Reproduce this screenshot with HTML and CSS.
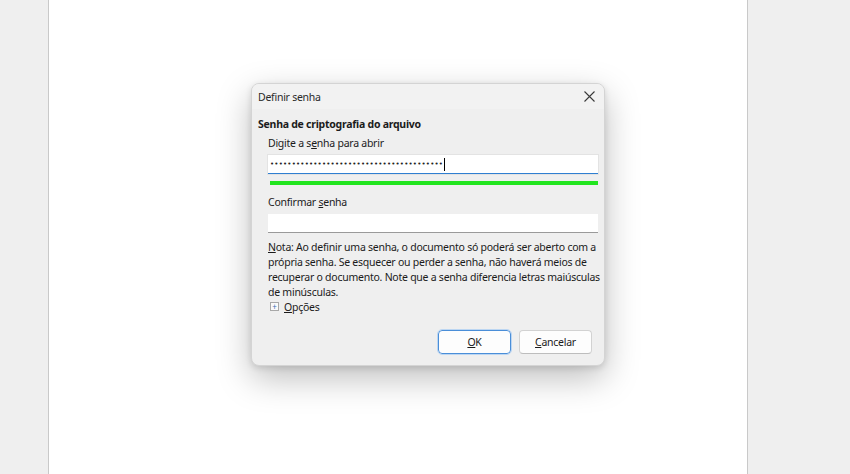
FILE: index.html
```html
<!DOCTYPE html>
<html lang="pt-BR">
<head>
    <meta charset="UTF-8">
    <meta name="viewport" content="width=device-width, initial-scale=1.0">
    <title>Definir senha</title>
    <link rel="stylesheet" href="styles.css">
</head>
<body>
    <div class="page">
        <div class="dialog">
            <div class="titlebar">
                <span class="title">Definir senha</span>
                <svg class="close" width="11" height="11" viewBox="0 0 11 11">
                    <path d="M0.5 0.5 L10.5 10.5 M10.5 0.5 L0.5 10.5" stroke="#3a3a3a" stroke-width="1.1" fill="none"/>
                </svg>
            </div>
            <div class="content">
                <div class="section-title">Senha de criptografia do arquivo</div>
                <div class="group">
                    <div class="label label-first">Digite a s<u>e</u>nha para abrir</div>
                    <div class="input focused">
                        <span class="dots">••••••••••••••••••••••••••••••••••••••••</span><span class="caret"></span>
                    </div>
                    <div class="strength"></div>
                    <div class="label label-second">Confirmar <u>s</u>enha</div>
                    <div class="input"></div>
                    <p class="note"><u>N</u>ota: Ao definir uma senha, o documento só poderá ser aberto com a<br>própria senha. Se esquecer ou perder a senha, não haverá meios de<br>recuperar o documento. Note que a senha diferencia letras maiúsculas<br>de minúsculas.</p>
                    <div class="options">
                        <span class="expander">+</span>
                        <span><u>O</u>pções</span>
                    </div>
                </div>
                <div class="buttons">
                    <button class="btn btn-default"><u>O</u>K</button>
                    <button class="btn"><u>C</u>ancelar</button>
                </div>
            </div>
        </div>
    </div>
</body>
</html>
```

FILE: styles.css
```css
body {
    margin: 0;
    background-color: #efefef;
    font-family: "Noto Sans", "Open Sans", sans-serif;
    font-size: 10.5px;
    letter-spacing: -0.25px;
    color: #1b1b1b;
    overflow: hidden;
}
.page {
    width: 700px;
    height: 474px;
    margin-left: 48px;
    background-color: #fff;
    border-left: 1px solid #c9c9c9;
    border-right: 1px solid #c9c9c9;
    padding-top: 83px;
    box-sizing: border-box;
}
.dialog {
    width: 354px;
    height: 283px;
    margin-left: 202px;
    background-color: #efefef;
    border: 1px solid #d4d4d4;
    border-radius: 8px;
    box-sizing: border-box;
    box-shadow: 0 12px 34px rgba(0, 0, 0, 0.26), 0 2px 6px rgba(0, 0, 0, 0.12);
    overflow: hidden;
}
.titlebar {
    height: 25px;
    display: flex;
    align-items: center;
    justify-content: space-between;
    padding: 0 8px 0 6px;
    background-color: #f2f2f2;
    color: #2a2a2a;
}
.close {
    margin-right: 1px;
}
.content {
    padding: 7px 6px 0 6px;
}
.section-title {
    font-weight: bold;
    height: 16px;
    line-height: 16px;
}
.group {
    padding-left: 10px;
}
.label {
    height: 16px;
    line-height: 16px;
}
.label-first {
    margin-top: 3px;
}
.label-second {
    margin-top: 9px;
}
.input {
    height: 18px;
    margin-top: 4px;
    background-color: #fff;
    border-bottom: 1px solid #9a9a9a;
    display: flex;
    align-items: center;
    padding-left: 2px;
}
.input.focused {
    border-bottom: 1px solid #2f7fd1;
    outline: 1px solid #e3e3e3;
}
.dots {
    font-family: "DejaVu Sans", sans-serif;
    font-size: 7px;
    letter-spacing: 0.2px;
    color: #222;
}
.caret {
    width: 1px;
    height: 13px;
    background-color: #000;
    margin-left: 1px;
}
.strength {
    height: 4px;
    margin: 7px 0 0 2px;
    background-color: #22e51f;
}
.note {
    margin: 7px 0 0 0;
    line-height: 15px;
    white-space: nowrap;
}
.options {
    display: flex;
    align-items: center;
    gap: 5px;
    height: 14px;
}
.expander {
    width: 7px;
    height: 7px;
    border: 1px solid #a8a8a8;
    background-color: #fafafa;
    font-size: 8px;
    line-height: 7px;
    text-align: center;
    color: #3a6fb0;
    margin-left: 2px;
    margin-top: -2px;
    letter-spacing: 0;
}
.buttons {
    display: flex;
    justify-content: flex-end;
    gap: 8px;
    margin-top: 16px;
    padding-right: 6px;
}
.btn {
    width: 73px;
    height: 24px;
    font-family: inherit;
    font-size: 10.5px;
    letter-spacing: -0.25px;
    color: #1b1b1b;
    background-color: #fdfdfd;
    border: 1px solid #d2d2d2;
    border-bottom-color: #bdbdbd;
    border-radius: 4px;
}
.btn-default {
    border: 1px solid #4a8ed8;
    outline: 1px solid #bcd6f2;
}
```
